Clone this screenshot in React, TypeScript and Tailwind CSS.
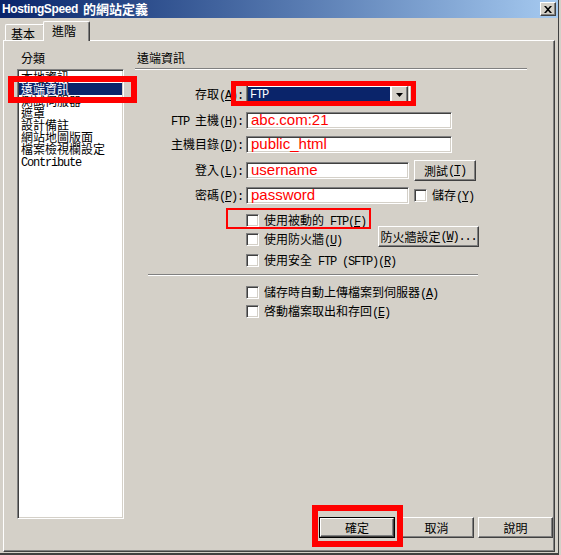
import React from "react";

const MONO =
  "font-['Liberation_Mono',monospace] text-[12px] tracking-[-1.2px] whitespace-pre";
const CJK =
  "font-['Noto_Sans_CJK_TC','Noto_Sans_CJK_JP',sans-serif] text-[12px]";

function Txt({ s }: { s: string }) {
  const parts: { t: string; m: boolean; u: boolean }[] = [];
  for (let i = 0; i < s.length; i++) {
    let c = s[i];
    let u = false;
    if (c === "&" && i + 1 < s.length) {
      i++;
      c = s[i];
      u = true;
    }
    const m = c.charCodeAt(0) < 128;
    const last = parts[parts.length - 1];
    if (last && !u && !last.u && last.m === m) last.t += c;
    else parts.push({ t: c, m, u });
  }
  return (
    <>
      {parts.map((p, i) => (
        <span
          key={i}
          className={
            (p.m ? MONO : CJK) + (p.u ? " underline underline-offset-[1px]" : "")
          }
        >
          {p.t}
        </span>
      ))}
    </>
  );
}

const SUNKEN =
  "border border-t-[#808080] border-l-[#808080] border-r-white border-b-white shadow-[inset_1px_1px_0_#404040,inset_-1px_-1px_0_#d4d0c8]";
const RAISED =
  "bg-[#d4d0c8] border border-t-white border-l-white border-r-[#404040] border-b-[#404040] shadow-[inset_-1px_-1px_0_#808080]";

function Check() {
  return <div className={`w-[13px] h-[13px] bg-white shrink-0 ${SUNKEN}`} />;
}

function CheckRow({ label, className = "" }: { label: string; className?: string }) {
  return (
    <div className={`flex items-center h-[13px] leading-[12px] ${className}`}>
      <Check />
      <span className="ml-[5px] whitespace-nowrap">
        <Txt s={label} />
      </span>
    </div>
  );
}

function Btn({ label, className = "" }: { label: string; className?: string }) {
  return (
    <div
      className={`${RAISED} h-[21px] flex items-center justify-center leading-[12px] shrink-0 whitespace-nowrap ${className}`}
    >
      <Txt s={label} />
    </div>
  );
}

function Field({ value, className = "" }: { value: string; className?: string }) {
  return (
    <div
      className={`${SUNKEN} bg-white h-[17px] flex items-center pl-[4px] pb-[2px] overflow-hidden shrink-0 ${className}`}
    >
      <span className="font-['Liberation_Sans',Arial,sans-serif] text-[15px] leading-[15px] text-[#ff0000] whitespace-nowrap">
        {value}
      </span>
    </div>
  );
}

function Row({
  label,
  children,
  className = "",
}: {
  label: string;
  children: React.ReactNode;
  className?: string;
}) {
  return (
    <div className={`flex items-center ${className}`}>
      <div className="w-[108px] text-right leading-[12px] whitespace-nowrap shrink-0">
        <Txt s={label} />
      </div>
      <div className="ml-[3px] flex items-center">{children}</div>
    </div>
  );
}

const items = [
  "本地資訊",
  "遠端資訊",
  "測試伺服器",
  "遮罩",
  "設計備註",
  "網站地圖版面",
  "檔案檢視欄設定",
  "Contribute",
];

export default function App() {
  return (
    <div className="relative w-[561px] h-[555px] bg-[#d4d0c8] flex overflow-hidden text-black font-['Noto_Sans_CJK_TC',sans-serif] text-[12px] leading-[12px]">
      <div className="w-[558px] flex flex-col">
        {/* Title bar */}
        <div className="h-[18px] bg-linear-to-r from-[#0a246a] to-[#a6caf0] flex items-center pl-[2px] pr-[2px] leading-[18px]">
          <span className="text-white font-bold font-['Liberation_Sans',Arial,sans-serif] text-[12px] tracking-[-0.4px]">
            HostingSpeed
          </span>
          <span className="ml-[5px] text-white font-bold font-['Noto_Sans_CJK_TC',sans-serif] text-[13px]">
            的網站定義
          </span>
          <div className={`${RAISED} ml-auto w-[16px] h-[14px] flex items-center justify-center`}>
            <svg width="8" height="7" viewBox="0 0 8 7">
              <path
                d="M0 0h2l2 2.2L6 0h2L5 3.5 8 7H6L4 4.8 2 7H0l3-3.5z"
                fill="#000"
              />
            </svg>
          </div>
        </div>

        {/* Tabs */}
        <div className="h-[22px] flex items-end pl-[5px]">
          <div className="h-[16px] w-[40px] border-t border-l border-r border-t-white border-l-white border-r-[#404040] shadow-[inset_-1px_0_0_#808080] rounded-t-[2px] pl-[5px] pt-[3px] leading-[12px]">
            <Txt s="基本" />
          </div>
          <div className="relative z-10 -ml-[2px] -mb-[1px] h-[20px] w-[47px] bg-[#d4d0c8] border-t border-l border-r border-t-white border-l-white border-r-[#404040] shadow-[inset_-1px_0_0_#808080] rounded-t-[2px] pl-[8px] pt-[3px] leading-[12px]">
            <Txt s="進階" />
          </div>
        </div>

        {/* Panel */}
        <div className="ml-[3px] w-[552px] h-[512px] border border-t-white border-l-white border-r-[#404040] border-b-[#404040] shadow-[inset_-1px_-1px_0_#808080] flex">
          {/* Left column */}
          <div className="pl-[13px] pt-[11px] flex flex-col">
            <div className="pl-[4px] leading-[12px]">
              <Txt s="分類" />
            </div>
            <div className={`${SUNKEN} mt-[5px] bg-white w-[107px] h-[450px] p-[1px]`}>
              {items.map((it, i) => (
                <div
                  key={it}
                  className={`h-[12px] leading-[12px] pl-[2px] whitespace-nowrap ${
                    i === 1 ? "bg-[#0a246a] text-white" : "text-black"
                  }`}
                >
                  <Txt s={it} />
                </div>
              ))}
            </div>
          </div>

          {/* Right column */}
          <div className="ml-[11px] flex-1 flex flex-col pt-[11px] pb-[13px] pr-[1px]">
            <div className="pl-[2px] leading-[12px]">
              <Txt s="遠端資訊" />
            </div>
            <div className="mt-[4px] w-[392px] h-[2px] border-t border-t-[#808080] border-b border-b-white" />

            <Row label="存取(&A):" className="mt-[14px]">
              <div className={`${SUNKEN} bg-white w-[164px] h-[21px] flex items-center`}>
                <div className="ml-[1px] flex-1 h-[15px] bg-[#0a246a] text-white flex items-center pl-[2px] leading-[12px]">
                  <Txt s="FTP" />
                </div>
                <div className={`${RAISED} ml-[1px] mr-[1px] w-[17px] h-[17px] flex items-center justify-center`}>
                  <svg width="7" height="4" viewBox="0 0 7 4">
                    <path d="M0 0h7L3.5 4z" fill="#000" />
                  </svg>
                </div>
              </div>
            </Row>

            <Row label="FTP 主機(&H):" className="mt-[7px]">
              <Field value="abc.com:21" className="w-[206px]" />
            </Row>

            <Row label="主機目錄(&D):" className="mt-[7px]">
              <Field value="public_html" className="w-[206px]" />
            </Row>

            <Row label="登入(&L):" className="mt-[7px] h-[21px]">
              <Field value="username" className="w-[163px]" />
              <Btn label="測試(&T)" className="ml-[5px] w-[62px]" />
            </Row>

            <Row label="密碼(&P):" className="mt-[6px]">
              <Field value="password" className="w-[163px]" />
              <div className="ml-[5px]">
                <CheckRow label="儲存(&Y)" />
              </div>
            </Row>

            <div className="mt-[10px] pl-[111px]">
              <CheckRow label="使用被動的 FTP(&F)" />
            </div>

            <div className="-mt-[1px] pl-[111px] flex items-start">
              <CheckRow label="使用防火牆(&U)" className="mt-[7px] w-[132px]" />
              <Btn label="防火牆設定(&W)..." className="w-[101px]" />
            </div>

            <div className="mt-[7px] pl-[111px]">
              <CheckRow label="使用安全 FTP (SFTP)(&R)" />
            </div>

            <div className="mt-[7px] ml-[13px] w-[330px] h-[2px] border-t border-t-[#808080] border-b border-b-white" />

            <div className="mt-[10px] pl-[111px]">
              <CheckRow label="儲存時自動上傳檔案到伺服器(&A)" />
            </div>
            <div className="mt-[6px] pl-[111px]">
              <CheckRow label="啓動檔案取出和存回(&E)" />
            </div>

            <div className="mt-auto flex justify-end gap-[4px]">
              <div className="w-[76px] h-[21px] border border-black flex">
                <div className={`${RAISED} flex-1 flex items-center justify-center leading-[12px]`}>
                  <Txt s="確定" />
                </div>
              </div>
              <Btn label="取消" className="w-[75px]" />
              <Btn label="說明" className="w-[75px]" />
            </div>
          </div>
        </div>
        <div className="h-[1px]" />
        <div className="h-[2px] bg-[#404040]" />
      </div>
      <div className="w-[1px] bg-[#404040]" />
      <div className="w-[2px]" />

      {/* Red annotation boxes */}
      <div className="absolute left-[8px] top-[76px] w-[129px] h-[27px] border-[6px] border-[#ff0000]" />
      <div className="absolute left-[231px] top-[81px] w-[185px] h-[25px] border-[5px] border-[#ff0000]" />
      <div className="absolute left-[226px] top-[208px] w-[145px] h-[21px] border-2 border-[#ff0000]" />
      <div className="absolute left-[312px] top-[505px] w-[91px] h-[42px] border-[6px] border-[#ff0000]" />
    </div>
  );
}
